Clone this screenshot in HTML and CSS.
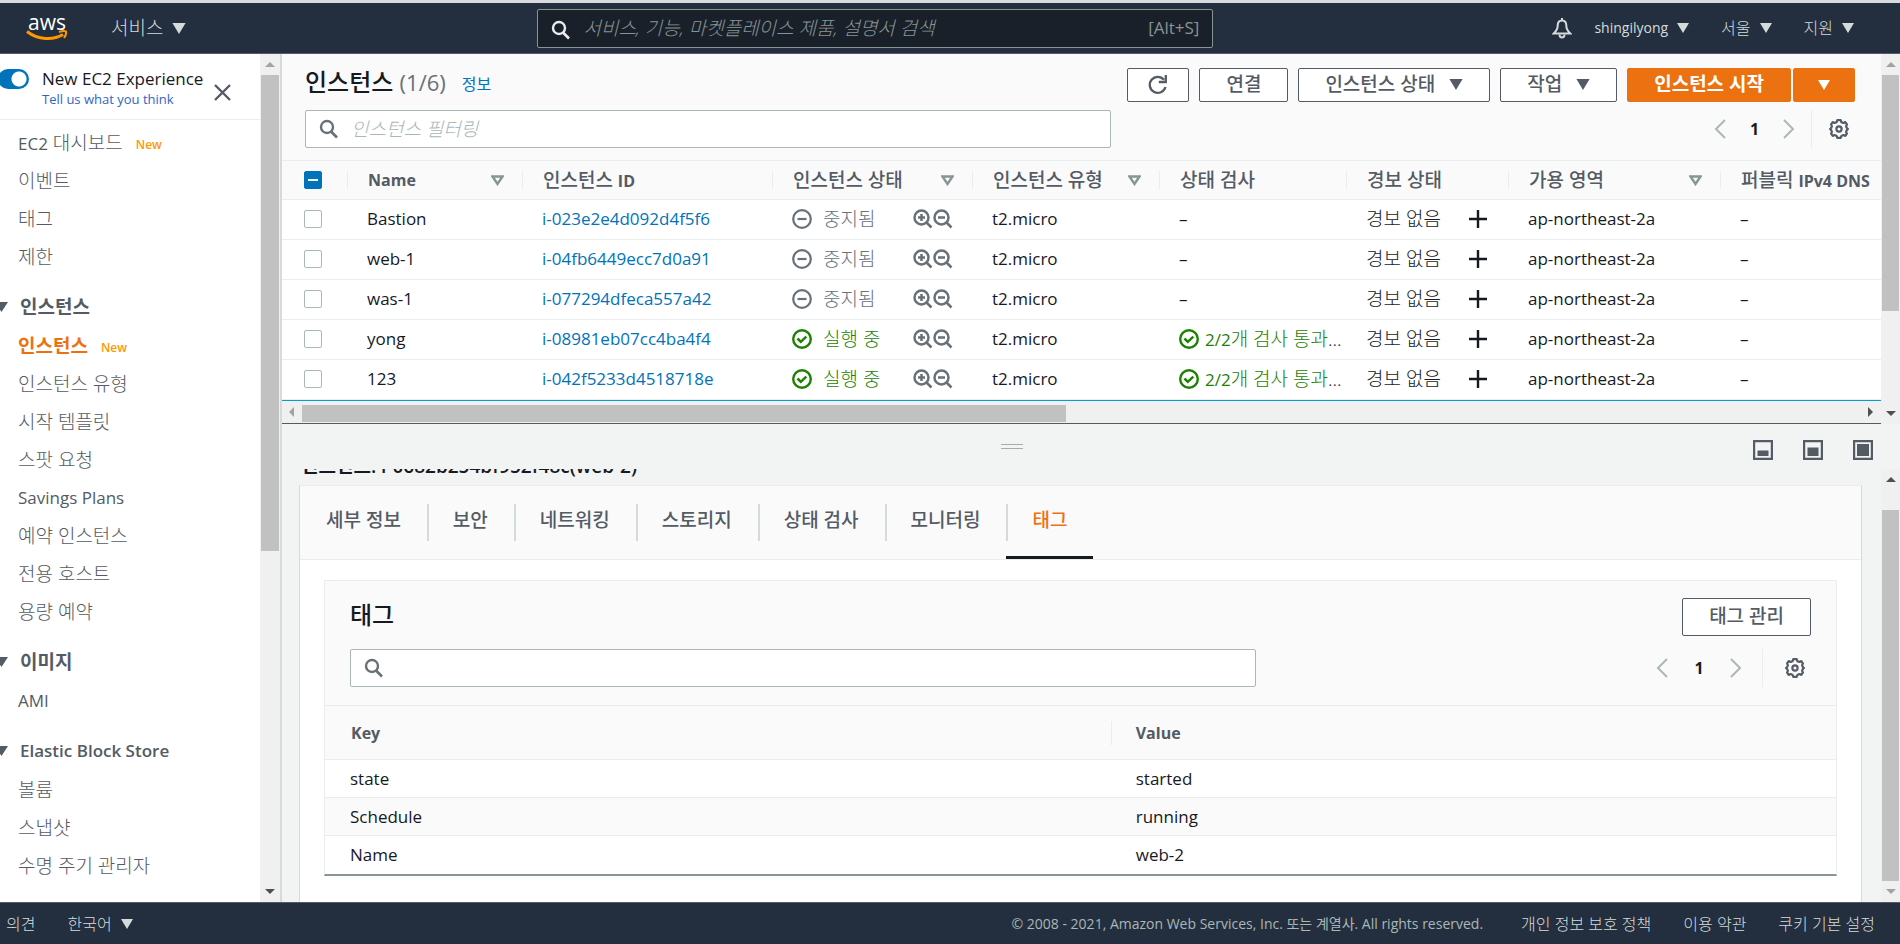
FILE: index.html
```html
<!DOCTYPE html>
<html lang="ko">
<head>
<meta charset="UTF-8" />
<meta name="viewport" content="width=device-width, initial-scale=1" />
<title>인스턴스 | EC2 Management Console</title>
<link rel="stylesheet" href="styles.css">
</head>
<body>
<!-- icon sprites -->
<svg class="sprites" aria-hidden="true">
  <symbol id="i-search" viewBox="0 0 20 20"><circle cx="8" cy="8" r="6" fill="none" stroke="currentColor" stroke-width="2.4"/><path d="M12 12.5l6 6" stroke="currentColor" stroke-width="2.6"/></symbol>
  <symbol id="i-down" viewBox="0 0 12 10"><path d="M0 0h12L6 10z" fill="currentColor"/></symbol>
  <symbol id="i-filter" viewBox="0 0 13 11"><path d="M1.5 1.5h10L6.500 9z" fill="none" stroke="currentColor" stroke-width="2.400"/></symbol>
  <symbol id="i-prev" viewBox="0 0 12 20"><path d="M11 1L2 10l9 9" fill="none" stroke="currentColor" stroke-width="2"/></symbol>
  <symbol id="i-next" viewBox="0 0 12 20"><path d="M1 1l9 9-9 9" fill="none" stroke="currentColor" stroke-width="2"/></symbol>
  <symbol id="i-gear" viewBox="0 0 20 20"><path d="M8.300 1.200h3.400l.7 2 2 .8 1.900-.9 1.600 2.300-.8 1.800.6 1.600 1.200 1.200-1.200 1.300-.6 1.600.8 1.800-1.600 2.200-1.900-.8-2 .8-.7 1.900H8.300l-.7-1.900-2-.8-1.900.8-1.600-2.200.8-1.800-.6-1.600L1.100 10l1.200-1.200.6-1.600-.8-1.800 1.600-2.300 1.900.9 2-.8z" fill="none" stroke="currentColor" stroke-width="2.200" stroke-linejoin="round"/><circle cx="10" cy="10" r="2.600" fill="none" stroke="currentColor" stroke-width="2.200"/></symbol>
  <symbol id="i-stopped" viewBox="0 0 20 20"><circle cx="10" cy="10" r="8.800" fill="none" stroke="currentColor" stroke-width="2.200"/><path d="M5.500 10h9" stroke="currentColor" stroke-width="2.200"/></symbol>
  <symbol id="i-ok" viewBox="0 0 20 20"><circle cx="10" cy="10" r="8.800" fill="none" stroke="currentColor" stroke-width="2.400"/><path d="M5.500 9.500l3.300 3.300 5.500-5.200" fill="none" stroke="currentColor" stroke-width="2.500"/></symbol>
  <symbol id="i-zoomin" viewBox="0 0 20 20"><circle cx="8.500" cy="8.500" r="7" fill="none" stroke="currentColor" stroke-width="2.500"/><path d="M13.500 13.500l5 5M5 8.500h7M8.500 5v7" stroke="currentColor" stroke-width="2.500"/></symbol>
  <symbol id="i-zoomout" viewBox="0 0 20 20"><circle cx="8.500" cy="8.500" r="7" fill="none" stroke="currentColor" stroke-width="2.500"/><path d="M13.500 13.500l5 5M5 8.500h7" stroke="currentColor" stroke-width="2.500"/></symbol>
  <symbol id="i-plus" viewBox="0 0 18 18"><path d="M9 0v18M0 9h18" stroke="currentColor" stroke-width="2.400"/></symbol>
  <symbol id="i-caret" viewBox="0 0 8 10"><path d="M-5 0H8L1.500 10z" fill="currentColor"/></symbol>
  <symbol id="i-up" viewBox="0 0 10 5"><path d="M5 0l5 5H0z" fill="currentColor"/></symbol>
  <symbol id="i-dn" viewBox="0 0 10 5"><path d="M0 0h10L5 5z" fill="currentColor"/></symbol>
</svg>

<header class="topbar">
  <a class="logo" href="#" aria-label="aws">
    <span class="logo-text">aws</span>
    <svg width="42" height="12" viewBox="0 0 42 12"><path d="M1 1.500C12 10 27 10.500 37 4.500" fill="none" stroke="#ff9900" stroke-width="3"/><path d="M33 2c4-1.500 7-1 7-.5.500 2-.5 4.500-2 6.500" fill="none" stroke="#ff9900" stroke-width="2"/></svg>
  </a>
  <button class="nav-btn services">서비스 <svg class="tri big"><use href="#i-down"/></svg></button>
  <div class="nav-search">
    <svg class="ico20"><use href="#i-search"/></svg>
    <input type="text" aria-label="검색" placeholder="서비스, 기능, 마켓플레이스 제품, 설명서 검색">
    <span>[Alt+S]</span>
  </div>
  <div class="account">
    <button class="nav-btn bell" aria-label="알림"><svg width="20" height="21" viewBox="0 0 20 21"><path d="M10 2.500c-3 0-4.300 2.500-4.300 5 0 4-1.200 5.500-4 8h16.600c-2.800-2.500-4-4-4-8 0-2.500-1.300-5-4.300-5z" fill="none" stroke="currentColor" stroke-width="2"/><path d="M10 0v3M7.500 16.500c0 4 5 4 5 0" fill="none" stroke="currentColor" stroke-width="2"/></svg></button>
    <button class="nav-btn user">shingilyong <svg class="tri"><use href="#i-down"/></svg></button>
    <button class="nav-btn">서울 <svg class="tri"><use href="#i-down"/></svg></button>
    <button class="nav-btn">지원 <svg class="tri"><use href="#i-down"/></svg></button>
  </div>
</header>

<div class="layout">
  <aside class="sidebar">
    <div class="side-content">
      <div class="experience">
        <input type="checkbox" class="toggle" id="newExp" checked>
        <div class="exp-text">
          <label for="newExp">New EC2 Experience</label>
          <a href="#">Tell us what you think</a>
        </div>
        <button class="close" aria-label="닫기"><svg width="17" height="17" viewBox="0 0 17 17"><path d="M1 1l15 15M16 1L1 16" stroke="currentColor" stroke-width="2.400"/></svg></button>
      </div>
      <nav class="side-nav">
        <ul>
          <li><a href="#"><span class="latin">EC2</span> 대시보드</a><span class="new">New</span></li>
          <li><a href="#">이벤트</a></li>
          <li><a href="#">태그</a></li>
          <li><a href="#">제한</a></li>
        </ul>
        <h3><svg class="caret"><use href="#i-caret"/></svg>인스턴스</h3>
        <ul>
          <li><a href="#" class="active">인스턴스</a><span class="new">New</span></li>
          <li><a href="#">인스턴스 유형</a></li>
          <li><a href="#">시작 템플릿</a></li>
          <li><a href="#">스팟 요청</a></li>
          <li><a href="#" class="latin">Savings Plans</a></li>
          <li><a href="#">예약 인스턴스</a></li>
          <li><a href="#">전용 호스트</a></li>
          <li><a href="#">용량 예약</a></li>
        </ul>
        <h3><svg class="caret"><use href="#i-caret"/></svg>이미지</h3>
        <ul>
          <li><a href="#" class="latin">AMI</a></li>
        </ul>
        <h3 class="block-store"><svg class="caret"><use href="#i-caret"/></svg>Elastic Block Store</h3>
        <ul>
          <li><a href="#">볼륨</a></li>
          <li><a href="#">스냅샷</a></li>
          <li><a href="#">수명 주기 관리자</a></li>
        </ul>
      </nav>
    </div>
    <div class="vscroll side-scroll" aria-hidden="true">
      <svg class="arrow off"><use href="#i-up"/></svg>
      <div class="thumb"></div><div class="rest"></div>
      <svg class="arrow"><use href="#i-dn"/></svg>
    </div>
  </aside>

  <main class="main">
    <section class="list-panel">
      <div class="list-content">
        <div class="list-head">
          <div class="title-row">
            <h1>인스턴스 <span>(1/6)</span></h1>
            <a class="info" href="#">정보</a>
            <div class="actions">
              <button class="btn icon-btn" aria-label="새로 고침"><svg width="20" height="20" viewBox="0 0 20 20"><path d="M17.500 12A8 8 0 1 1 16 4.800" fill="none" stroke="currentColor" stroke-width="2.300"/><path d="M17.800 0v7h-7" fill="none" stroke="currentColor" stroke-width="2.300"/></svg></button>
              <button class="btn">연결</button>
              <button class="btn">인스턴스 상태 <svg class="tri big"><use href="#i-down"/></svg></button>
              <button class="btn">작업 <svg class="tri big"><use href="#i-down"/></svg></button>
              <div class="split">
                <button class="btn primary">인스턴스 시작</button>
                <button class="btn primary more" aria-label="더 보기"><svg class="tri"><use href="#i-down"/></svg></button>
              </div>
            </div>
          </div>
          <div class="filter-row">
            <div class="search-box">
              <svg class="ico20"><use href="#i-search"/></svg>
              <input type="text" aria-label="인스턴스 필터링" placeholder="인스턴스 필터링">
            </div>
            <div class="pager">
              <button aria-label="이전"><svg class="chev"><use href="#i-prev"/></svg></button>
              <b>1</b>
              <button aria-label="다음"><svg class="chev"><use href="#i-next"/></svg></button>
              <button class="settings" aria-label="기본 설정"><svg class="ico20"><use href="#i-gear"/></svg></button>
            </div>
          </div>
        </div>
        <table class="instances">
          <colgroup><col class="c-check"><col class="c-name"><col class="c-id"><col class="c-state"><col class="c-type"><col class="c-status"><col class="c-alarm"><col class="c-zone"><col></colgroup>
          <thead>
            <tr>
              <th><input type="checkbox" class="partial" aria-label="모두 선택"></th>
              <th class="latin"><div>Name<svg class="filter"><use href="#i-filter"/></svg></div></th>
              <th><div><span>인스턴스 <span class="latin">ID</span></span></div></th>
              <th><div>인스턴스 상태<svg class="filter"><use href="#i-filter"/></svg></div></th>
              <th><div>인스턴스 유형<svg class="filter"><use href="#i-filter"/></svg></div></th>
              <th><div>상태 검사</div></th>
              <th><div>경보 상태</div></th>
              <th><div>가용 영역<svg class="filter"><use href="#i-filter"/></svg></div></th>
              <th><div><span>퍼블릭 <span class="latin">IPv4 DNS</span></span></div></th>
            </tr>
          </thead>
          <tbody>
            <tr>
              <td><input type="checkbox" aria-label="Bastion"></td>
              <td>Bastion</td>
              <td><a href="#">i-023e2e4d092d4f5f6</a></td>
              <td><div class="state"><svg class="ico20"><use href="#i-stopped"/></svg><span>중지됨</span><svg class="ico20"><use href="#i-zoomin"/></svg><svg class="ico20"><use href="#i-zoomout"/></svg></div></td>
              <td>t2.micro</td>
              <td>–</td>
              <td><div class="alarm">경보 없음<button aria-label="경보 추가"><svg class="ico18"><use href="#i-plus"/></svg></button></div></td>
              <td>ap-northeast-2a</td>
              <td>–</td>
            </tr>
            <tr>
              <td><input type="checkbox" aria-label="web-1"></td>
              <td>web-1</td>
              <td><a href="#">i-04fb6449ecc7d0a91</a></td>
              <td><div class="state"><svg class="ico20"><use href="#i-stopped"/></svg><span>중지됨</span><svg class="ico20"><use href="#i-zoomin"/></svg><svg class="ico20"><use href="#i-zoomout"/></svg></div></td>
              <td>t2.micro</td>
              <td>–</td>
              <td><div class="alarm">경보 없음<button aria-label="경보 추가"><svg class="ico18"><use href="#i-plus"/></svg></button></div></td>
              <td>ap-northeast-2a</td>
              <td>–</td>
            </tr>
            <tr>
              <td><input type="checkbox" aria-label="was-1"></td>
              <td>was-1</td>
              <td><a href="#">i-077294dfeca557a42</a></td>
              <td><div class="state"><svg class="ico20"><use href="#i-stopped"/></svg><span>중지됨</span><svg class="ico20"><use href="#i-zoomin"/></svg><svg class="ico20"><use href="#i-zoomout"/></svg></div></td>
              <td>t2.micro</td>
              <td>–</td>
              <td><div class="alarm">경보 없음<button aria-label="경보 추가"><svg class="ico18"><use href="#i-plus"/></svg></button></div></td>
              <td>ap-northeast-2a</td>
              <td>–</td>
            </tr>
            <tr>
              <td><input type="checkbox" aria-label="yong"></td>
              <td>yong</td>
              <td><a href="#">i-08981eb07cc4ba4f4</a></td>
              <td><div class="state running"><svg class="ico20"><use href="#i-ok"/></svg><span>실행 중</span><svg class="ico20"><use href="#i-zoomin"/></svg><svg class="ico20"><use href="#i-zoomout"/></svg></div></td>
              <td>t2.micro</td>
              <td><div class="check"><svg class="ico20"><use href="#i-ok"/></svg><span><span class="latin">2/2</span>개 검사 통과</span>...</div></td>
              <td><div class="alarm">경보 없음<button aria-label="경보 추가"><svg class="ico18"><use href="#i-plus"/></svg></button></div></td>
              <td>ap-northeast-2a</td>
              <td>–</td>
            </tr>
            <tr>
              <td><input type="checkbox" aria-label="123"></td>
              <td>123</td>
              <td><a href="#">i-042f5233d4518718e</a></td>
              <td><div class="state running"><svg class="ico20"><use href="#i-ok"/></svg><span>실행 중</span><svg class="ico20"><use href="#i-zoomin"/></svg><svg class="ico20"><use href="#i-zoomout"/></svg></div></td>
              <td>t2.micro</td>
              <td><div class="check"><svg class="ico20"><use href="#i-ok"/></svg><span><span class="latin">2/2</span>개 검사 통과</span>...</div></td>
              <td><div class="alarm">경보 없음<button aria-label="경보 추가"><svg class="ico18"><use href="#i-plus"/></svg></button></div></td>
              <td>ap-northeast-2a</td>
              <td>–</td>
            </tr>
          </tbody>
        </table>
        <div class="hscroll" aria-hidden="true">
          <svg class="harrow off" viewBox="0 0 5 10"><path d="M5 0v10L0 5z" fill="currentColor"/></svg>
          <div class="thumb"></div><div class="rest"></div>
          <svg class="harrow" viewBox="0 0 5 10"><path d="M0 0v10l5-5z" fill="currentColor"/></svg>
        </div>
      </div>
      <div class="vscroll list-scroll" aria-hidden="true">
        <svg class="arrow off"><use href="#i-up"/></svg>
        <div class="thumb"></div><div class="rest"></div>
        <svg class="arrow"><use href="#i-dn"/></svg>
      </div>
    </section>

    <section class="detail-panel">
      <div class="splitter">
        <div class="grip"></div>
        <div class="sizes">
          <button aria-label="작게"><svg class="ico20" viewBox="0 0 20 20"><path d="M1 1h18v18H1z" fill="none" stroke="currentColor" stroke-width="2.400"/><rect x="4.500" y="10.500" width="11" height="5.500" fill="currentColor"/></svg></button>
          <button aria-label="중간"><svg class="ico20" viewBox="0 0 20 20"><path d="M1 1h18v18H1z" fill="none" stroke="currentColor" stroke-width="2.400"/><rect x="4.500" y="7.500" width="11" height="8.500" fill="currentColor"/></svg></button>
          <button aria-label="크게"><svg class="ico20" viewBox="0 0 20 20"><path d="M1 1h18v18H1z" fill="none" stroke="currentColor" stroke-width="2.400"/><rect x="4" y="4" width="12" height="12" fill="currentColor"/></svg></button>
        </div>
      </div>
      <div class="detail-row">
        <div class="detail-content">
          <div class="detail-title"><h2>인스턴스: i-0682b254bf952f48c(web-2)</h2></div>
          <div class="detail-card">
            <div class="tabs" role="tablist">
              <button role="tab">세부 정보</button>
              <button role="tab">보안</button>
              <button role="tab">네트워킹</button>
              <button role="tab">스토리지</button>
              <button role="tab">상태 검사</button>
              <button role="tab">모니터링</button>
              <button role="tab" class="active" aria-selected="true">태그</button>
            </div>
            <div class="tags-card">
              <div class="tags-head">
                <div class="title-row">
                  <h2>태그</h2>
                  <button class="btn manage">태그 관리</button>
                </div>
                <div class="filter-row">
                  <div class="search-box">
                    <svg class="ico20"><use href="#i-search"/></svg>
                    <input type="text" aria-label="태그 검색">
                  </div>
                  <div class="pager">
                    <button aria-label="이전"><svg class="chev"><use href="#i-prev"/></svg></button>
                    <b>1</b>
                    <button aria-label="다음"><svg class="chev"><use href="#i-next"/></svg></button>
                    <button class="settings" aria-label="기본 설정"><svg class="ico20"><use href="#i-gear"/></svg></button>
                  </div>
                </div>
              </div>
              <table class="tags">
                <thead><tr><th><div>Key</div></th><th><div>Value</div></th></tr></thead>
                <tbody>
                  <tr><td>state</td><td>started</td></tr>
                  <tr><td>Schedule</td><td>running</td></tr>
                  <tr><td>Name</td><td>web-2</td></tr>
                </tbody>
              </table>
            </div>
          </div>
        </div>
        <div class="vscroll detail-scroll" aria-hidden="true">
          <svg class="arrow"><use href="#i-up"/></svg>
          <div class="rest"></div><div class="thumb"></div>
          <svg class="arrow off"><use href="#i-dn"/></svg>
        </div>
      </div>
    </section>
  </main>
</div>

<footer class="footer">
  <a href="#">의견</a>
  <button class="nav-btn lang">한국어 <svg class="tri"><use href="#i-down"/></svg></button>
  <span class="copy">© 2008 - 2021, Amazon Web Services, Inc. 또는 계열사. All rights reserved.</span>
  <a href="#">개인 정보 보호 정책</a>
  <a href="#">이용 약관</a>
  <a href="#">쿠키 기본 설정</a>
</footer>
</body>
</html>
```
FILE: styles.css
```css
*, *::before, *::after {
  box-sizing: border-box;
}
body {
  margin: 0;
  height: 100vh;
  display: flex;
  flex-direction: column;
  overflow: hidden;
  font-family: 'Open Sans', 'Noto Sans CJK KR', sans-serif;
  font-size: 17px;
  line-height: 24px;
  color: #16191f;
  background: #fff;
  border-top: 3px solid #d9dbdd;
}
h1, h2, h3, ul {
  margin: 0;
  padding: 0;
}
ul {
  list-style: none;
}
a {
  color: #0073bb;
  text-decoration: none;
}
button {
  font: inherit;
  color: inherit;
  background: none;
  border: 0;
  padding: 0;
  cursor: pointer;
}
input {
  font: inherit;
  color: inherit;
}
svg {
  display: block;
  flex: none;
}
.sprites {
  display: none;
}
.ico18 { width: 18px; height: 18px; }
.ico20 { width: 20px; height: 20px; }
.tri { width: 12px; height: 10px; }
.tri.big { width: 14px; height: 11px; }
.chev { width: 12px; height: 20px; }

/* Top bar */
.topbar {
  display: flex;
  align-items: center;
  height: 51px;
  flex: none;
  padding: 0 46px 0 26px;
  background: #232f3e;
  border-bottom: 1px solid #545b64;
  color: #d5dbdb;
}
.logo {
  width: 42px;
  color: #fff;
  text-align: center;
}
.logo-text {
  display: block;
  font-size: 21px;
  font-weight: 500;
  line-height: 16px;
}
.nav-btn {
  display: flex;
  align-items: center;
  gap: 9px;
  font-size: 16px;
  font-weight: 300;
}
.services {
  margin-left: 43px;
  font-size: 19px;
}
.nav-search {
  display: flex;
  align-items: center;
  width: 676px;
  height: 39px;
  margin-left: auto;
  padding: 0 13px 0 13px;
  background: #1a2029;
  border: 1px solid #879596;
  border-radius: 2px;
  color: #879596;
}
.nav-search svg {
  margin-top: 4px;
  color: #eaeded;
}
.nav-search input {
  flex: 1;
  min-width: 0;
  margin-left: 12px;
  padding: 0;
  border: 0;
  background: none;
  font-size: 19px;
}
.nav-search input::placeholder {
  color: #879596;
  font-style: italic;
  font-weight: 300;
}
.account {
  display: flex;
  align-items: center;
  gap: 32px;
  margin-left: 339px;
}
.user {
  margin-left: -10px;
  font-size: 14px;
  font-weight: 400;
}

.layout {
  display: flex;
  flex: 1;
  min-height: 0;
}

/* Fake scrollbars */
.vscroll {
  display: flex;
  flex-direction: column;
  flex: none;
  width: 19px;
  background: #f0f0f0;
}
.thumb {
  background: #c1c1c1;
}
.vscroll .thumb {
  margin: 0 1px;
}
.arrow {
  width: 10px;
  height: 5px;
  margin: 8px auto;
  color: #505050;
}
.arrow.off, .harrow.off {
  color: #a3a3a3;
}
.vscroll.side-scroll { width: 20px; }
.side-scroll .thumb { flex: 59; }
.side-scroll .rest { flex: 41; }
.list-scroll .thumb { flex: 72; }
.list-scroll .rest { flex: 28; }
.detail-scroll .rest { flex: 5; }
.detail-scroll .thumb { flex: 95; }
.hscroll {
  display: flex;
  align-items: center;
  height: 24px;
  border-top: 1px solid #00a1c9;
  border-bottom: 1px solid #545b64;
  background: #f0f0f0;
}
.harrow {
  width: 5px;
  height: 10px;
  margin: 0 8px 0 7px;
  color: #505050;
}
.hscroll .thumb {
  flex: 49;
  height: 17px;
  margin-top: 2px;
}
.hscroll .rest { flex: 51; }

/* Sidebar */
.sidebar {
  display: flex;
  width: 282px;
  flex: none;
  border-right: 2px solid #d5dbdb;
}
.side-content {
  flex: 1;
  overflow: hidden;
}
.experience {
  display: flex;
  height: 66px;
  padding-top: 13px;
  border-bottom: 1px solid #eaeded;
}
.toggle {
  appearance: none;
  width: 31px;
  height: 20px;
  margin: 2px 13px 0 -2px;
  border-radius: 10px;
  background: radial-gradient(circle at 21px 10px, #fff 7px, #0073bb 8px);
}
.exp-text {
  display: flex;
  flex-direction: column;
}
.exp-text a {
  font-size: 13px;
  line-height: 16px;
  color: #2f65c4;
}
.close {
  align-self: flex-start;
  margin: 17px 0 0 11px;
  color: #545b64;
}
.side-nav {
  padding-top: 4px;
  font-size: 19px;
  color: #545b64;
}
.side-nav li {
  display: flex;
  align-items: center;
  height: 38px;
  padding-left: 18px;
}
.side-nav li a {
  color: #545b64;
  font-weight: 300;
}
.latin {
  font-size: 17px;
  font-weight: 400;
}
th .latin, th.latin {
  font-size: 16px;
  font-weight: 700;
}
.side-nav li a.latin {
  font-weight: 400;
}
.side-nav li a.active {
  color: #ec7211;
  font-weight: 700;
}
.new {
  margin: 4px 0 0 13px;
  font-size: 12px;
  font-weight: 600;
  color: #ff9900;
}
.side-nav h3 {
  display: flex;
  align-items: center;
  height: 40px;
  margin-top: 11px;
  font-size: 19px;
}
.side-nav .block-store {
  font-size: 17px;
  font-weight: 600;
}
.caret {
  width: 8px;
  height: 10px;
  margin-right: 12px;
}

/* Instance list */
.main {
  display: flex;
  flex: 1;
  flex-direction: column;
  min-width: 0;
}
.list-panel {
  display: flex;
  flex: none;
}
.list-content {
  flex: 1;
  min-width: 0;
}
.list-head {
  padding: 14px 26px 12px 23px;
  background: #fafafa;
  border-bottom: 1px solid #eaeded;
}
.title-row {
  display: flex;
  align-items: flex-start;
}
h1 {
  font-size: 24px;
  line-height: 28px;
  font-weight: 500;
}
h1 span {
  font-weight: 400;
  font-size: 22px;
  color: #687078;
}
.info {
  margin: 4px 0 0 16px;
  font-size: 16px;
}
.actions {
  display: flex;
  gap: 10px;
  margin-left: auto;
}
.btn {
  display: flex;
  align-items: center;
  justify-content: center;
  gap: 14px;
  height: 34px;
  padding: 0 26px 2px;
  border: 1px solid #545b64;
  border-radius: 2px;
  background: #fff;
  color: #545b64;
  font-size: 19px;
  font-weight: 500;
}
.icon-btn {
  width: 62px;
  padding: 0;
}
.split {
  display: flex;
  gap: 2px;
}
.primary {
  border-color: #ec7211;
  background: #ec7211;
  color: #fff;
  font-weight: 700;
}
.primary.more {
  width: 62px;
  padding: 0;
}
.filter-row {
  display: flex;
  align-items: center;
  justify-content: space-between;
  margin-top: 8px;
}
.search-box {
  display: flex;
  align-items: center;
  width: 52%;
  height: 38px;
  padding: 0 13px;
  border: 1px solid #aab7b8;
  border-radius: 2px;
  background: #fff;
  color: #687078;
}
.search-box input {
  flex: 1;
  min-width: 0;
  margin-left: 12px;
  padding: 0;
  border: 0;
  outline: 0;
  font-size: 19px;
}
.search-box input::placeholder {
  color: #aab7b8;
  font-style: italic;
  font-weight: 300;
}
.pager {
  display: flex;
  align-items: center;
  height: 38px;
  padding-right: 6px;
  color: #aab7b8;
}
.pager b {
  width: 57px;
  text-align: center;
  font-size: 16px;
  color: #16191f;
}
.pager .settings {
  display: flex;
  align-items: center;
  height: 38px;
  margin-left: 16px;
  padding-left: 17px;
  border-left: 1px solid #eaeded;
  color: #545b64;
}
table {
  width: 100%;
  table-layout: fixed;
  border-collapse: separate;
  border-spacing: 0;
}
th, td {
  padding: 0;
  text-align: left;
  white-space: nowrap;
  border-bottom: 1px solid #eaeded;
}
th {
  background: #fafafa;
  color: #545b64;
  font-size: 16px;
}
.c-check { width: 65px; }
.c-name { width: 175px; }
.c-id { width: 250px; }
.c-state { width: 200px; }
.c-type, .c-status { width: 187px; }
.c-alarm { width: 162px; }
.c-zone { width: 212px; }
.instances th {
  height: 39px;
  font-size: 19px;
  font-weight: 500;
  line-height: 18px;
}
.instances th.latin {
  font-size: 16px;
  font-weight: 700;
}
.instances th div {
  display: flex;
  align-items: center;
  justify-content: space-between;
  height: 18px;
  padding: 0 18px 0 20px;
  border-left: 1px solid #eaeded;
}
.filter {
  width: 13px;
  height: 11px;
  color: #879596;
}
.instances td {
  height: 40px;
  padding: 0 0 1px 20px;
}
.instances td:first-child {
  padding-left: 22px;
}
.instances input {
  appearance: none;
  display: block;
  width: 18px;
  height: 18px;
  margin: 0;
  border: 1px solid #aab7b8;
  border-radius: 2px;
  background: #fff;
}
.instances th input {
  margin-left: 22px;
}
.instances input.partial {
  border-color: #0073bb;
  background: linear-gradient(#fff, #fff) center / 10px 2px no-repeat #0073bb;
}
.state, .check, .alarm {
  display: flex;
  align-items: center;
  font-size: 19px;
  font-weight: 300;
}
.state {
  color: #687078;
}
.state span {
  width: 90px;
  margin-left: 11px;
}
.running > :nth-child(-n+2), .check svg, .check span {
  color: #1d8102;
}
.check svg {
  margin-right: 6px;
}
.alarm {
  justify-content: space-between;
  padding-right: 21px;
}

/* Details */
.detail-panel {
  display: flex;
  flex: 1;
  flex-direction: column;
  min-height: 0;
  background: #f2f3f3;
}
.splitter {
  display: grid;
  grid-template-columns: 1fr 22px 1fr;
  align-items: center;
  flex: none;
  height: 45px;
  padding: 0 27px 0 0;
  color: #545b64;
}
.grip {
  grid-column: 2;
  height: 5px;
  margin-left: -66px;
  margin-right: 66px;
  border: 1px solid #aaa;
  border-width: 1px 0;
}
.sizes {
  grid-column: 3;
  display: flex;
  justify-content: flex-end;
  gap: 30px;
  padding-top: 6px;
}
.detail-row {
  display: flex;
  flex: 1;
  min-height: 0;
}
.detail-content {
  display: flex;
  flex-direction: column;
  flex: 1;
  min-width: 0;
  padding: 0 19px 0 17px;
}
/* scrolled so that only the foot of the heading shows */
.detail-title {
  display: flex;
  align-items: flex-end;
  flex: none;
  height: 10px;
  margin-bottom: 6px;
  padding-left: 2px;
  overflow: hidden;
}
.detail-title h2 {
  font-size: 19px;
  font-weight: 600;
  line-height: 26px;
}
.detail-card {
  flex: 1;
  border: 1px solid #d5dbdb;
  border-top-color: #eaeded;
  border-bottom: 0;
  background: #fff;
}
.tabs {
  display: flex;
  height: 74px;
  background: #fafafa;
  border-bottom: 1px solid #eaeded;
}
.tabs button {
  position: relative;
  padding: 0 26px 6px;
  color: #545b64;
  font-size: 19px;
  font-weight: 500;
}
.tabs button + button::before {
  content: "";
  position: absolute;
  left: 0;
  top: 18px;
  height: 37px;
  border-left: 2px solid #d5dbdb;
}
.tabs .active {
  border-bottom: 3px solid #16191f;
  padding-bottom: 3px;
  color: #ec7211;
}
.tags-card {
  margin: 20px 24px 0;
  border: 1px solid #eaeded;
  border-bottom: 2px solid #879596;
}
.tags-head {
  padding: 17px 25px 18px;
  background: #fafafa;
  border-bottom: 1px solid #eaeded;
}
.tags-head h2 {
  font-size: 24px;
  font-weight: 500;
  line-height: 34px;
}
.tags-head .btn {
  height: 38px;
  margin-left: auto;
}
.tags-head .filter-row {
  margin-top: 13px;
}
.tags-head .search-box {
  width: 62%;
}
.tags-head .pager b {
  width: 62px;
}
.tags-head .settings {
  margin-left: 20px;
  padding-left: 22px;
}
table.tags th {
  height: 54px;
}
.tags th div {
  padding-left: 26px;
}
.tags th + th div {
  border-left: 1px solid #eaeded;
  padding-left: 24px;
}
.tags td {
  height: 38px;
  padding-left: 25px;
}
.tags th:first-child {
  width: 52%;
}
.tags tr:nth-child(even) td {
  background: #fafafa;
}
.tags tr:last-child td {
  border-bottom: 0;
}

.footer {
  display: flex;
  align-items: center;
  flex: none;
  height: 42px;
  padding: 0 25px 0 6px;
  gap: 32px;
  background: #232f3e;
  border-top: 1px solid #545b64;
  font-size: 16px;
}
.footer a, .footer button {
  color: #d5dbdb;
  font-weight: 300;
}
.footer .copy {
  margin: 0 6px 0 auto;
  font-size: 14px;
  color: #aab7b8;
}
```
